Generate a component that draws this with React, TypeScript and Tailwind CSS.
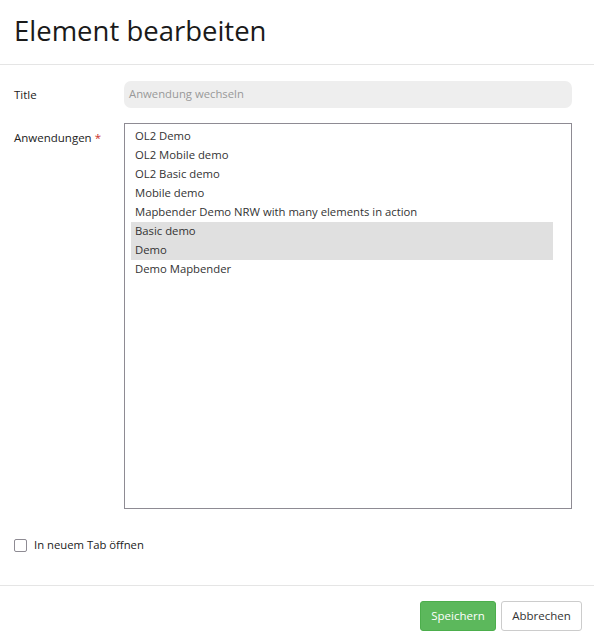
import React from "react";

const apps = [
  "OL2 Demo",
  "OL2 Mobile demo",
  "OL2 Basic demo",
  "Mobile demo",
  "Mapbender Demo NRW with many elements in action",
  "Basic demo",
  "Demo",
  "Demo Mapbender",
];
const selected = new Set(["Basic demo", "Demo"]);

export default function App() {
  return (
    <div className="w-[594px] h-[643px] bg-white text-[#222] flex flex-col" style={{ fontFamily: '"Open Sans", "Noto Sans", sans-serif' }}>
      <div className="h-[65px] border-b border-[#e5e5e5] flex items-center px-[14px] pb-[3px]">
        <h1 className="text-[27.5px] leading-none text-[#1a1a1a]">Element bearbeiten</h1>
      </div>
      <div className="flex-1 flex flex-col px-[14px] pt-[16px]">
        <div className="flex items-center">
          <label className="w-[110px] text-[11.5px]">Title</label>
          <div className="flex-1 mr-[8px] h-[27px] rounded-[7px] bg-[#eeeeee] flex items-center px-[5px] text-[11.3px] text-[#999]">
            Anwendung wechseln
          </div>
        </div>
        <div className="flex mt-[15px]">
          <label className="w-[110px] text-[11.5px] pt-[6px]">
            Anwendungen <span className="text-[#c9302c]">*</span>
          </label>
          <div className="flex-1 mr-[8px] h-[386px] border border-[#8e8b93] pt-[3px] pl-[6px] pr-[18px]">
            {apps.map((a) => (
              <div
                key={a}
                className={`h-[19px] flex items-center px-[4px] text-[11.3px] text-[#333] ${selected.has(a) ? "bg-[#e0e0e0]" : ""}`}
              >
                {a}
              </div>
            ))}
          </div>
        </div>
        <div className="flex items-center mt-[28px] gap-[7px]">
          <div className="w-[13px] h-[13px] border-[1.5px] border-[#8e8b93] rounded-[2px]" />
          <span className="text-[11.3px]">In neuem Tab öffnen</span>
        </div>
      </div>
      <div className="h-[58px] border-t border-[#e5e5e5] flex items-start justify-end gap-[5px] pt-[15px] pr-[12px]">
        <button className="h-[30px] w-[76px] rounded-[3px] bg-[#5cb85c] border border-[#4cae4c] text-white text-[11.5px]">Speichern</button>
        <button className="h-[30px] w-[81px] rounded-[3px] bg-white border border-[#cccccc] text-[#333] text-[11.5px]">Abbrechen</button>
      </div>
    </div>
  );
}
